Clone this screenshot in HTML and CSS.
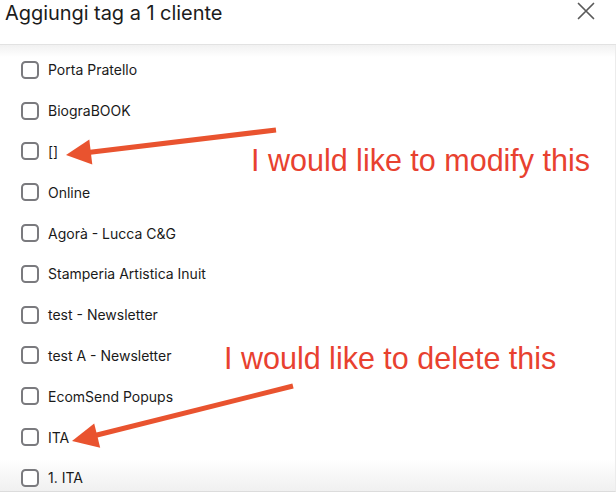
FILE: index.html
```html
<!DOCTYPE html>
<html lang="it">
<head>
<meta charset="utf-8">
<title>Aggiungi tag a 1 cliente</title>
<link rel="stylesheet" href="styles.css">
</head>
<body>
<div class="modal">
  <header class="modal-header">
    <h1 class="modal-title">Aggiungi tag a 1 cliente</h1>
    <button class="close-btn" aria-label="Chiudi">
      <svg width="18" height="18" viewBox="0 0 18 18"><path d="M1.5 1.5L16.5 16.5M16.5 1.5L1.5 16.5" stroke="#5a5a5a" stroke-width="1.7" stroke-linecap="round" fill="none"/></svg>
    </button>
  </header>
  <ul class="tag-list">
    <li class="tag-row"><span class="checkbox"></span><span class="tag-label">Porta Pratello</span></li>
    <li class="tag-row"><span class="checkbox"></span><span class="tag-label">BiograBOOK</span></li>
    <li class="tag-row"><span class="checkbox"></span><span class="tag-label">[]</span></li>
    <li class="tag-row"><span class="checkbox"></span><span class="tag-label">Online</span></li>
    <li class="tag-row"><span class="checkbox"></span><span class="tag-label">Agorà - Lucca C&amp;G</span></li>
    <li class="tag-row"><span class="checkbox"></span><span class="tag-label">Stamperia Artistica Inuit</span></li>
    <li class="tag-row"><span class="checkbox"></span><span class="tag-label">test - Newsletter</span></li>
    <li class="tag-row"><span class="checkbox"></span><span class="tag-label">test A - Newsletter</span></li>
    <li class="tag-row"><span class="checkbox"></span><span class="tag-label">EcomSend Popups</span></li>
    <li class="tag-row"><span class="checkbox"></span><span class="tag-label">ITA</span></li>
    <li class="tag-row"><span class="checkbox"></span><span class="tag-label">1. ITA</span></li>
  </ul>
</div>

<svg class="annot-arrows" width="616" height="500" viewBox="0 0 616 500">
  <g fill="#e9532f" stroke="#e9532f">
    <line x1="276" y1="130" x2="88" y2="152.4" stroke-width="5"/>
    <polygon points="66,155 89.3,139.6 92.3,164.4" stroke="none"/>
    <line x1="293" y1="386" x2="95" y2="435.5" stroke-width="5"/>
    <polygon points="72,441 94.2,423.6 100.2,447.8" stroke="none"/>
  </g>
</svg>
<div class="annot-text annot-modify">I would like to modify this</div>
<div class="annot-text annot-delete">I would like to delete this</div>
</body>
</html>
```

FILE: styles.css
```css
html, body {
  margin: 0;
  padding: 0;
  background: #ffffff;
}

body {
  width: 616px;
  height: 500px;
  overflow: hidden;
  position: relative;
  font-family: Inter, "Noto Sans", "Liberation Sans", sans-serif;
}

.modal {
  display: flex;
  flex-direction: column;
  width: 616px;
}

.modal-header {
  height: 45px;
  box-sizing: border-box;
  display: flex;
  align-items: flex-start;
  justify-content: space-between;
  padding: 0 21px 0 5px;
  border-bottom: 1px solid #e2e2e2;
}

.modal-title {
  margin: 0;
  padding-top: 1px;
  font-size: 20px;
  font-weight: 400;
  line-height: 24px;
  color: #1c1c1c;
  letter-spacing: -0.05px;
}

.close-btn {
  border: none;
  background: none;
  padding: 0;
  margin-top: 2px;
  width: 18px;
  height: 18px;
  display: flex;
}

.tag-list {
  list-style: none;
  margin: 0;
  padding: 4.5px 0 0 0;
  height: 447px;
  box-sizing: border-box;
  overflow: hidden;
  border-bottom: 1px solid #dcdcdc;
  border-right: 1px solid #ececec;
  background: linear-gradient(to bottom,
    #f1f1f1 0px,
    #ffffff 12px,
    #ffffff calc(100% - 32px),
    #f0f0f0 100%);
}

.tag-row {
  height: 40.8px;
  display: flex;
  align-items: center;
  gap: 9px;
  padding-left: 21px;
}

.checkbox {
  width: 18px;
  height: 18px;
  box-sizing: border-box;
  border: 2px solid #7a7a7e;
  border-radius: 4.5px;
  background: #fff;
  flex: none;
}

.tag-label {
  font-size: 14px;
  color: #1a1a1a;
  line-height: 17px;
}

.annot-arrows {
  position: absolute;
  left: 0;
  top: 0;
  pointer-events: none;
}

.annot-text {
  position: absolute;
  font-family: "Liberation Sans", Arial, sans-serif;
  font-size: 30.5px;
  line-height: 1;
  color: #e8412f;
  white-space: nowrap;
}

.annot-modify {
  left: 251px;
  top: 145px;
}

.annot-delete {
  left: 224px;
  top: 343px;
}
```
